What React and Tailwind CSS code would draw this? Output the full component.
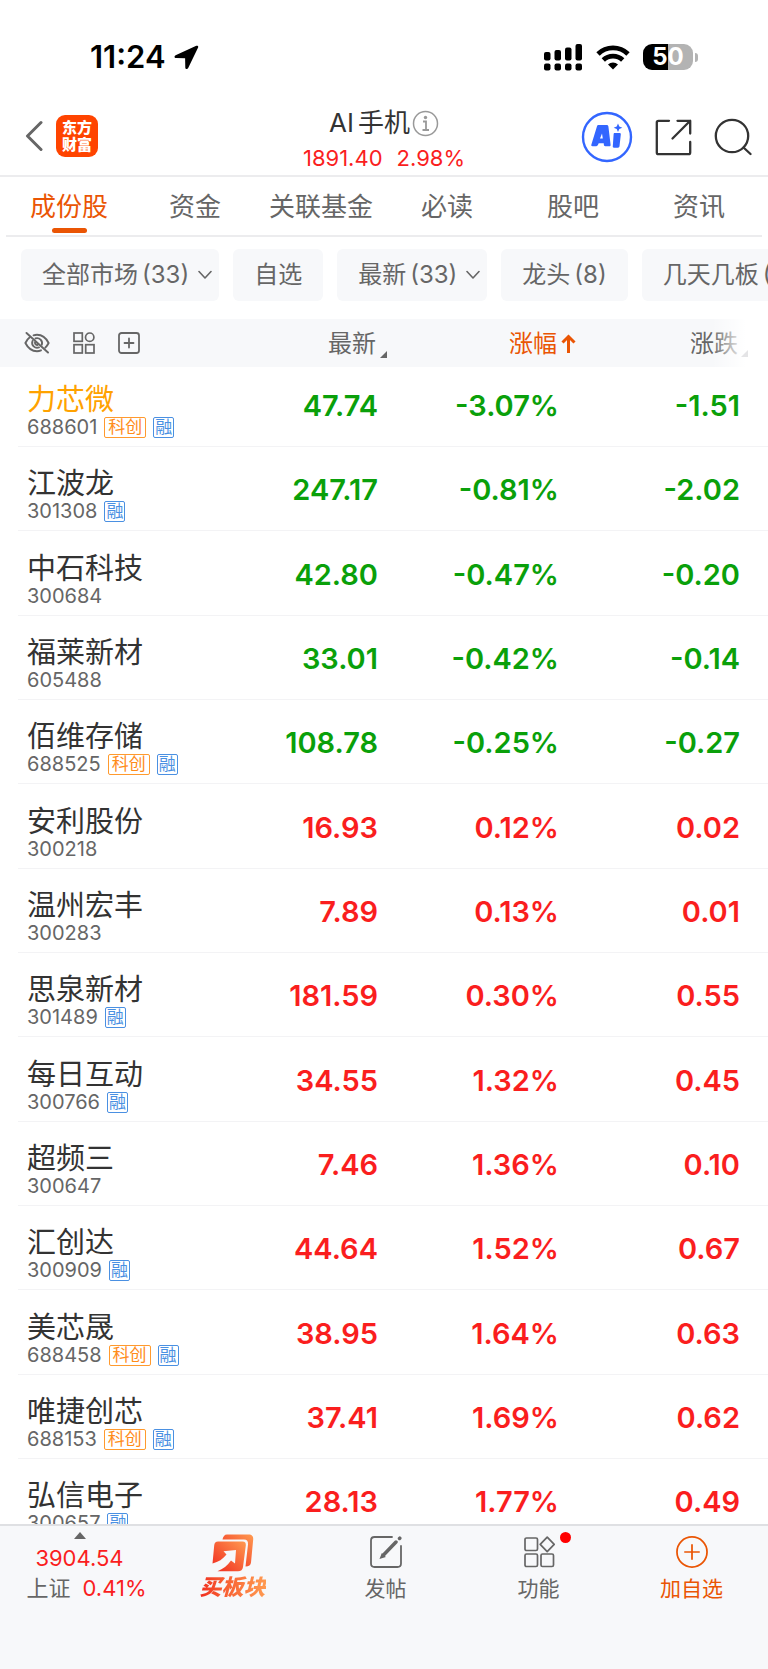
const TABS = ['成份股', '资金', '关联基金', '必读', '股吧', '资讯'];

const CHIPS = [
  { label: '全部市场', count: '(33)', menu: true },
  { label: '自选' },
  { label: '最新', count: '(33)', menu: true },
  { label: '龙头', count: '(8)' },
  { label: '几天几板', count: '(8)' },
];

const STOCKS = [
  { name: '力芯微', code: '688601', tags: ['科创', '融'], price: '47.74', pct: '-3.07%', diff: '-1.51', held: true },
  { name: '江波龙', code: '301308', tags: ['融'], price: '247.17', pct: '-0.81%', diff: '-2.02' },
  { name: '中石科技', code: '300684', tags: [], price: '42.80', pct: '-0.47%', diff: '-0.20' },
  { name: '福莱新材', code: '605488', tags: [], price: '33.01', pct: '-0.42%', diff: '-0.14' },
  { name: '佰维存储', code: '688525', tags: ['科创', '融'], price: '108.78', pct: '-0.25%', diff: '-0.27' },
  { name: '安利股份', code: '300218', tags: [], price: '16.93', pct: '0.12%', diff: '0.02' },
  { name: '温州宏丰', code: '300283', tags: [], price: '7.89', pct: '0.13%', diff: '0.01' },
  { name: '思泉新材', code: '301489', tags: ['融'], price: '181.59', pct: '0.30%', diff: '0.55' },
  { name: '每日互动', code: '300766', tags: ['融'], price: '34.55', pct: '1.32%', diff: '0.45' },
  { name: '超频三', code: '300647', tags: [], price: '7.46', pct: '1.36%', diff: '0.10' },
  { name: '汇创达', code: '300909', tags: ['融'], price: '44.64', pct: '1.52%', diff: '0.67' },
  { name: '美芯晟', code: '688458', tags: ['科创', '融'], price: '38.95', pct: '1.64%', diff: '0.63' },
  { name: '唯捷创芯', code: '688153', tags: ['科创', '融'], price: '37.41', pct: '1.69%', diff: '0.62' },
  { name: '弘信电子', code: '300657', tags: ['融'], price: '28.13', pct: '1.77%', diff: '0.49' },
];

function StatusBar() {
  return (
    <div className="flex h-[88px] shrink-0 items-center justify-between pt-[26px] pr-[70px] pl-[90px] text-black">
      <div className="flex items-center gap-2">
        <span className="text-[31px] leading-9 font-semibold">11:24</span>
        <svg width="25" height="25" viewBox="0 0 25 25" aria-hidden="true">
          <path d="M22.3.8 1.6 10.2c-1.7.8-1.3 2.9.5 2.9l9 .1.2 9.2c0 1.900 2.200 2.200 2.900.6L24.100 2.500c.6-1.200-.6-2.300-1.800-1.700z" fill="currentColor" />
        </svg>
      </div>
      <div className="flex items-center gap-[13px]">
        <svg width="39" height="27" viewBox="0 0 39 27" fill="currentColor" aria-hidden="true">
          <rect x="0" y="8" width="6.500" height="8.500" rx="2" />
          <rect x="10.500" y="6" width="6.500" height="10.500" rx="2" />
          <rect x="21" y="3.500" width="6.500" height="13" rx="2" />
          <rect x="31.500" y="0" width="6.500" height="16.500" rx="2" />
          <rect x="0" y="19.500" width="6.500" height="7" rx="2" />
          <rect x="10.500" y="19.500" width="6.500" height="7" rx="2" />
          <rect x="21" y="19.500" width="6.500" height="7" rx="2" />
          <rect x="31.500" y="19.500" width="6.500" height="7" rx="2" />
        </svg>
        <svg width="34" height="25" viewBox="0 0 34 25" aria-hidden="true">
          <path d="M2 9a21.500 21.500 0 0 1 30 0M7.300 15a14 14 0 0 1 19.400 0" fill="none" stroke="currentColor" strokeWidth="4.800" />
          <path d="M17 24.500l-5-5a7.200 7.200 0 0 1 10 0z" fill="currentColor" />
        </svg>
        <div className="flex items-center gap-[2px]">
          <div className="flex h-[26px] w-[50px] items-center justify-center rounded-[9px] bg-linear-to-r from-black from-50% to-[#b3b3b3] to-50% text-[24px] leading-none font-bold text-white">
            50
          </div>
          <div className="h-[9px] w-[3px] rounded-r-full bg-[#b3b3b3]" />
        </div>
      </div>
    </div>
  );
}

function Header() {
  return (
    <header className="grid h-[89px] shrink-0 grid-cols-[1fr_auto_1fr] items-end border-b-2 border-[#ececee] px-4">
      <div className="flex items-center gap-[13px] pb-[18px] pl-[9px]">
        <button type="button" aria-label="返回" className="text-[#666]">
          <svg width="18" height="32" viewBox="0 0 18 32" fill="none" stroke="currentColor" strokeWidth="3" strokeLinecap="round" strokeLinejoin="round">
            <path d="M16 2.500 2.500 16 16 29.500" />
          </svg>
        </button>
        <a href="#home" className="flex h-[42px] w-[42px] items-center justify-center rounded-[9px] bg-[#ff4400] text-center text-[15px] leading-[17px] font-black text-white">
          东方<br />财富
        </a>
      </div>
      <div className="flex flex-col items-center">
        <h1 className="flex items-center text-[26px] leading-9 text-[#333]">
          <span className="mr-1">AI</span>
          <span>手机</span>
          <svg className="ml-[2px]" width="27" height="27" viewBox="0 0 27 27" fill="none" stroke="#999" strokeWidth="1.500" aria-hidden="true">
            <circle cx="13.500" cy="13.500" r="12" />
            <path d="M11 11.500h3V20M10.500 20h6.500" strokeWidth="1.800" />
            <circle cx="13.500" cy="7.500" r="1.700" fill="#999" stroke="none" />
          </svg>
        </h1>
        <p className="flex gap-[14px] text-[22px] leading-[34px] text-[#fa1e1e]">
          <span>1891.40</span>
          <span>2.98%</span>
        </p>
      </div>
      <div className="flex items-center justify-end gap-[22px] pb-3 text-[#333]">
        <button type="button" aria-label="Ai">
          <svg width="52" height="52" viewBox="0 0 52 52" aria-hidden="true">
            <circle cx="26" cy="26" r="24" fill="none" stroke="#3366ff" strokeWidth="2.400" />
            <g fill="#3366ff">
              <path fillRule="evenodd" d="M17.500 14h8.200c1 0 1.600.6 1.700 1.500l2.200 18.200c.1 1-.4 1.500-1.300 1.500h-4c-.8 0-1.300-.4-1.400-1.200l-.2-1.700h-5l-.8 1.800c-.3.7-.8 1.100-1.600 1.100h-3.800c-1.100 0-1.500-.8-1.100-1.700l5.600-18.200c.3-.9.7-1.300 1.500-1.300zm3.500 8.500-2 5h2.800z" />
              <path d="M33.500 22h5c1 0 1.500.6 1.300 1.500l-1.300 11.800c-.1.900-.7 1.400-1.500 1.400h-4c-1 0-1.400-.6-1.200-1.400l.8-11.900c.1-.9.400-1.400.9-1.400z" />
              <path d="m37 12.500 1.300 2.900 3 1.300-3 1.300-1.300 3-1.300-3-3-1.300 3-1.300z" />
            </g>
          </svg>
        </button>
        <button type="button" aria-label="分享">
          <svg width="37" height="37" viewBox="0 0 37 37" fill="none" stroke="currentColor" strokeWidth="2.300" strokeLinecap="round" strokeLinejoin="round">
            <path d="M14 1.800H3.500c-1.100 0-1.700.6-1.700 1.700v30c0 1.100.6 1.700 1.700 1.700h30c1.100 0 1.700-.6 1.700-1.700V23M22.500 1.800h12.700v12.700M35.200 1.800 17.500 19.500" />
          </svg>
        </button>
        <button type="button" aria-label="搜索">
          <svg width="38" height="38" viewBox="0 0 38 38" fill="none" stroke="currentColor" strokeWidth="2.300" strokeLinecap="round">
            <circle cx="18" cy="18" r="16.200" />
            <path d="m29.500 29.500 7 6.500" />
          </svg>
        </button>
      </div>
    </header>
  );
}

function Tabs() {
  return (
    <nav className="mx-[6px] flex h-[60px] shrink-0 border-b-2 border-[#ececee] text-[26px]">
      {TABS.map((tab, i) => (
        <a
          key={tab}
          href="#tab"
          aria-current={i === 0 ? 'page' : undefined}
          className={
            i === 0
              ? 'flex flex-1 flex-col items-center pt-3 leading-[36px] text-[#ea5504]'
              : 'flex flex-1 flex-col items-center pt-3 leading-[36px] text-[#666]'
          }
        >
          {tab}
          {i === 0 && <span className="mt-[3px] h-[5px] w-[35px] rounded-full bg-[#ea5504]" />}
        </a>
      ))}
    </nav>
  );
}

function Chips() {
  return (
    <div className="flex shrink-0 gap-[14px] overflow-hidden pt-[12px] pb-[18px] pl-[21px] text-[24px] leading-[52px] text-[#666]">
      {CHIPS.map((chip) => (
        <button
          key={chip.label}
          type="button"
          className={
            chip.menu
              ? 'flex shrink-0 items-center rounded-md bg-[#f7f8fa] pr-[7px] pl-[21px]'
              : 'flex shrink-0 items-center rounded-md bg-[#f7f8fa] px-[21px]'
          }
        >
          <span>{chip.label}</span>
          {chip.count && <span className="ml-1">{chip.count}</span>}
          {chip.menu && (
            <svg className="ml-[9px]" width="14" height="10" viewBox="0 0 14 10" fill="none" stroke="currentColor" strokeWidth="1.600" strokeLinecap="round" strokeLinejoin="round" aria-hidden="true">
              <path d="M1 1.500 7 8l6-6.500" />
            </svg>
          )}
        </button>
      ))}
    </div>
  );
}

function TableTools() {
  return (
    <div className="flex items-center gap-[23px] pl-[6px]">
      <button type="button" aria-label="隐藏">
        <svg width="26" height="22" viewBox="0 0 26 22" fill="none" stroke="currentColor" strokeWidth="1.900" strokeLinecap="round">
          <path d="M9.500 3.300c1.100-.4 2.300-.6 3.500-.6 5 0 9 3 11.600 8.300a17 17 0 0 1-3.300 4.700M17 18.300c-1.300.6-2.600.9-4 .9-5 0-9-3-11.600-8.200C2.500 8.500 4 6.500 5.800 5.200" />
          <path d="M11.500 6.400a5 5 0 0 1 6.300 6.300M15 15.400A5 5 0 0 1 8.500 9" />
          <path d="M11 10.500a2.300 2.300 0 0 0 2.500 2.500M2.500 1l21.500 19.500" />
        </svg>
      </button>
      <button type="button" aria-label="视图">
        <svg width="22" height="22" viewBox="0 0 22 22" fill="none" stroke="currentColor" strokeWidth="1.700">
          <rect x="1" y="1" width="8.300" height="8.300" />
          <circle cx="16.700" cy="5.200" r="4.200" />
          <rect x="1" y="12.700" width="8.300" height="8.300" />
          <rect x="12.700" y="12.700" width="8.300" height="8.300" />
        </svg>
      </button>
      <button type="button" aria-label="添加">
        <svg width="22" height="22" viewBox="0 0 22 22" fill="none" stroke="currentColor" strokeWidth="1.800" strokeLinecap="round">
          <rect x="1" y="1" width="20" height="20" rx="2.500" />
          <path d="M11 6.500v9M6.500 11h9" />
        </svg>
      </button>
    </div>
  );
}

function Corner({ className }) {
  return (
    <svg className={className} width="7" height="7" viewBox="0 0 7 7" aria-hidden="true">
      <path d="M7 0v7H0z" fill="currentColor" />
    </svg>
  );
}

function StockTable() {
  return (
    <main className="min-h-0 flex-1 overflow-hidden">
      <table className="w-full table-fixed border-separate border-spacing-0">
        <colgroup>
          <col className="w-[18px]" />
          <col />
          <col className="w-[22%]" />
          <col className="w-[181px]" />
          <col className="w-[209px]" />
        </colgroup>
        <thead>
          <tr className="h-[48px] bg-[#f7f8fa] text-[24px] leading-8 text-[#666]">
            <td />
            <td><TableTools /></td>
            <th scope="col" className="pt-[2px] pr-[2px] text-right font-normal">
              <span className="relative">
                最新
                <Corner className="absolute bottom-0 left-full ml-1" />
              </span>
            </th>
            <th scope="col" aria-sort="ascending" className="pt-[2px] pr-[2px] text-right font-normal text-[#ea5504]">
              <span className="relative">
                涨幅
                <svg className="absolute top-[5px] left-full ml-1" width="15" height="20" viewBox="0 0 15 20" fill="none" stroke="currentColor" strokeWidth="3" aria-hidden="true">
                  <path d="M7.500 19V3M1.500 8.500l6-6 6 6" />
                </svg>
              </span>
            </th>
            <th scope="col" className="relative pt-[2px] pr-[30px] text-right font-normal">
              涨跌
              <span className="absolute inset-y-0 right-0 w-14 bg-linear-to-r from-white/0 to-white to-60%" />
              <Corner className="absolute right-[20px] bottom-[10px] text-[#e4e4e6]" />
            </th>
          </tr>
        </thead>
        <tbody>
          {STOCKS.map((s) => {
            const tone = s.diff.startsWith('-') ? 'text-[#0aa00a]' : 'text-[#fa1e1e]';
            return (
              <tr
                key={s.code}
                className="h-[84px] text-right text-[29px] leading-9 font-semibold first:h-[80px] nth-[3n]:h-[85px] [&>td]:pb-2 [&>td]:align-bottom [&>td+td]:border-b [&>td+td]:border-[#f3f3f5]"
              >
                <td />
                <td className="pl-[9px] text-left font-normal whitespace-nowrap">
                  <div className={s.held ? 'leading-[32px] text-[#ffa200]' : 'leading-[32px] text-[#333]'}>{s.name}</div>
                  <div className="flex h-[22px] items-center gap-[7px] text-[20px] leading-[22px] text-[#666]">
                    <span>{s.code}</span>
                    {s.tags.map((t) => (
                      <span
                        key={t}
                        className={
                          t === '融'
                            ? 'rounded-xs border border-[#4a90e2] px-px text-[17px] leading-[19px] text-[#4a90e2]'
                            : 'rounded-xs border border-[#ff9a2e] px-[3px] text-[17px] leading-[19px] text-[#ff8c1a]'
                        }
                      >
                        {t}
                      </span>
                    ))}
                  </div>
                </td>
                <td className={tone}><div className="mb-[14px]">{s.price}</div></td>
                <td className={tone}><div className="mb-[14px]">{s.pct}</div></td>
                <td className={tone}><div className="mr-[28px] mb-[14px]">{s.diff}</div></td>
              </tr>
            );
          })}
        </tbody>
      </table>
    </main>
  );
}

function BottomBar() {
  return (
    <footer className="flex h-[145px] shrink-0 border-t-2 border-[#dfe0e3] bg-[#f7f8fa] pl-[3px] text-[21px] leading-[30px] text-[#666]">
      <button type="button" className="flex flex-1 flex-col items-center pt-[6px] text-[22px] text-[#fa1e1e]">
        <svg width="12" height="7" viewBox="0 0 12 7" aria-hidden="true"><path d="M6 0l6 7H0z" fill="#666" /></svg>
        <span className="mt-1">3904.54</span>
        <span className="ml-[14px] flex gap-3"><span className="text-[#666]">上证</span><span>0.41%</span></span>
      </button>
      <button type="button" className="flex flex-1 flex-col items-center pt-[8px]">
        <svg width="42" height="38" viewBox="0 0 42 38" aria-hidden="true">
          <defs>
            <linearGradient id="buy" x1="0" y1="1" x2="1" y2="0">
              <stop offset="0" stopColor="#f0281e" />
              <stop offset="1" stopColor="#ff9a50" />
            </linearGradient>
          </defs>
          <path d="M10.500 5.500C11 2.500 12.500.5 15 .5h21.500c3.500 0 5 2 4.700 5L39 28.500c-.3 2.500-2 4-5.500 4l2.500-22c.3-3.500-1-5-4-5z" fill="url(#buy)" />
          <path d="M6 7.500h24.500c2.600 0 3.600 1.500 3.300 4L31 33c-.3 2.800-2 4.300-5 4.300H5.500C11 35 15.500 31.500 19 26.500l4 3 1-13.500-12.500 1.200 3 3.300C11 25 6.500 28 .5 29.500L2.200 11.500c.2-2.500 1.500-4 3.800-4z" fill="url(#buy)" />
        </svg>
        <span className="bg-linear-to-r from-[#f0281e] to-[#ff9a50] bg-clip-text text-[22px] font-black text-transparent italic">买板块</span>
      </button>
      <button type="button" className="flex flex-1 flex-col items-center pt-[10px]">
        <svg width="32" height="32" viewBox="0 0 32 32" fill="none" stroke="currentColor" strokeWidth="1.800" strokeLinecap="round" aria-hidden="true">
          <path d="M22 1H4.500C2.300 1 1 2.300 1 4.500v23C1 29.700 2.300 31 4.500 31h23c2.200 0 3.500-1.300 3.500-3.500V10" />
          <path d="M13.500 19 26 6M29.500 2.500l.3-.3" strokeWidth="3.500" />
          <path d="m11 21.500 1.200-3 2 2z" />
        </svg>
        <span className="mt-[6px]">发帖</span>
      </button>
      <button type="button" className="flex flex-1 flex-col items-center pt-[10px]">
        <span className="relative">
          <svg className="block" width="32" height="32" viewBox="0 0 32 32" fill="none" stroke="currentColor" strokeWidth="1.700" strokeLinejoin="round" aria-hidden="true">
            <rect x="2" y="2" width="12.500" height="12.500" rx="1.500" />
            <rect x="2" y="18" width="12.500" height="12.500" rx="1.500" />
            <rect x="18" y="18" width="12.500" height="12.500" rx="1.500" />
            <path d="m24.200 1.200 7 7.200-7 7.200-7-7.200z" />
          </svg>
          <span className="absolute -top-1 left-[37px] h-[11px] w-[11px] rounded-full bg-[#ff0000]" />
        </span>
        <span className="mt-[6px]">功能</span>
      </button>
      <button type="button" className="flex flex-1 flex-col items-center pt-[10px] text-[#ea5504]">
        <svg width="32" height="32" viewBox="0 0 33 33" fill="none" stroke="currentColor" strokeWidth="1.800" aria-hidden="true">
          <circle cx="16.500" cy="16.500" r="15.500" />
          <path d="M16.500 8.500v16M8.500 16.500h16" />
        </svg>
        <span className="mt-[6px]">加自选</span>
      </button>
    </footer>
  );
}

export default function App() {
  return (
    <div className="flex h-screen flex-col bg-white font-['Inter','Noto_Sans_CJK_SC',sans-serif]">
      <StatusBar />
      <Header />
      <Tabs />
      <Chips />
      <StockTable />
      <BottomBar />
    </div>
  );
}
